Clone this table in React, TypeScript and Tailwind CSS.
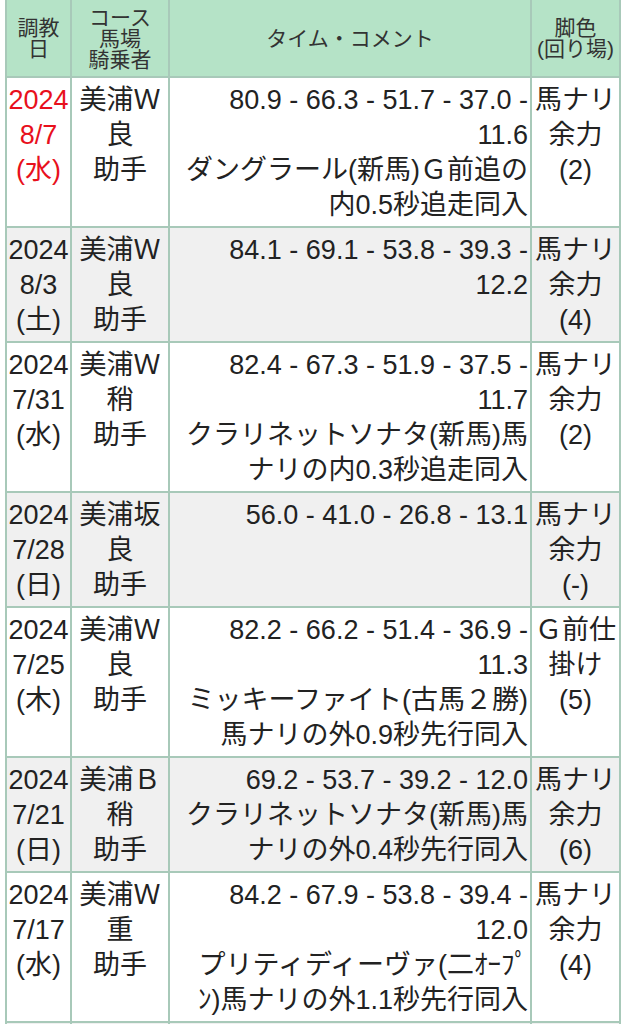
import * as React from "react";

type Row = {
  date: string[];
  course: string[];
  time: string[];
  leg: string[];
  red?: boolean;
};

const rows: Row[] = [
  {
    date: ["2024", "8/7", "(水)"],
    course: ["美浦Ｗ", "良", "助手"],
    time: ["80.9 - 66.3 - 51.7 - 37.0 -", "11.6", "ダングラール(新馬)Ｇ前追の", "内0.5秒追走同入"],
    leg: ["馬ナリ", "余力", "(2)"],
    red: true,
  },
  {
    date: ["2024", "8/3", "(土)"],
    course: ["美浦Ｗ", "良", "助手"],
    time: ["84.1 - 69.1 - 53.8 - 39.3 -", "12.2"],
    leg: ["馬ナリ", "余力", "(4)"],
  },
  {
    date: ["2024", "7/31", "(水)"],
    course: ["美浦Ｗ", "稍", "助手"],
    time: ["82.4 - 67.3 - 51.9 - 37.5 -", "11.7", "クラリネットソナタ(新馬)馬", "ナリの内0.3秒追走同入"],
    leg: ["馬ナリ", "余力", "(2)"],
  },
  {
    date: ["2024", "7/28", "(日)"],
    course: ["美浦坂", "良", "助手"],
    time: ["56.0 - 41.0 - 26.8 - 13.1"],
    leg: ["馬ナリ", "余力", "(-)"],
  },
  {
    date: ["2024", "7/25", "(木)"],
    course: ["美浦Ｗ", "良", "助手"],
    time: ["82.2 - 66.2 - 51.4 - 36.9 -", "11.3", "ミッキーファイト(古馬２勝)", "馬ナリの外0.9秒先行同入"],
    leg: ["Ｇ前仕", "掛け", "(5)"],
  },
  {
    date: ["2024", "7/21", "(日)"],
    course: ["美浦Ｂ", "稍", "助手"],
    time: ["69.2 - 53.7 - 39.2 - 12.0", "クラリネットソナタ(新馬)馬", "ナリの外0.4秒先行同入"],
    leg: ["馬ナリ", "余力", "(6)"],
  },
  {
    date: ["2024", "7/17", "(水)"],
    course: ["美浦Ｗ", "重", "助手"],
    time: ["84.2 - 67.9 - 53.8 - 39.4 -", "12.0", "プリティディーヴァ(二ｵｰﾌﾟ", "ﾝ)馬ナリの外1.1秒先行同入"],
    leg: ["馬ナリ", "余力", "(4)"],
  },
];

function Lines({ lines }: { lines: string[] }) {
  return (
    <>
      {lines.map((l, i) => (
        <div key={i} className="whitespace-nowrap">
          {l}
        </div>
      ))}
    </>
  );
}

export default function App() {
  const head = "bg-[#b5e3c7] text-[#333] text-[21px] leading-[21px] flex flex-col items-center justify-center text-center h-[76px]";
  const cell = "pt-[5px] pb-[3px] text-[27px] leading-[35px]";

  return (
    <div className="min-h-screen bg-white" style={{ fontFamily: "'Liberation Sans', 'Noto Sans CJK JP', sans-serif" }}>
      <div className="ml-[5px] grid w-[616px] grid-cols-[63px_96px_360px_87px] gap-[2px] bg-[#a8c9b9] px-[2px] pb-[2px] text-[#222]">
        <div className={head}>
          <div>調教</div>
          <div>日</div>
        </div>
        <div className={head}>
          <div>コース</div>
          <div>馬場</div>
          <div>騎乗者</div>
        </div>
        <div className={head}>
          <div>タイム・コメント</div>
        </div>
        <div className={head}>
          <div>脚色</div>
          <div>(回り場)</div>
        </div>

        {rows.map((r, i) => {
          const bg = i % 2 === 0 ? "bg-white" : "bg-[#f0f0f0]";
          return (
            <React.Fragment key={i}>
              <div className={`${cell} ${bg} text-center ${r.red ? "text-[#e8101c]" : ""}`}>
                <Lines lines={r.date} />
              </div>
              <div className={`${cell} ${bg} text-center`}>
                <Lines lines={r.course} />
              </div>
              <div className={`${cell} ${bg} pr-[2px] text-right`}>
                <Lines lines={r.time} />
              </div>
              <div className={`${cell} ${bg} text-center`}>
                <Lines lines={r.leg} />
              </div>
            </React.Fragment>
          );
        })}

        {/* next row, only its top edge is in view */}
        <div className="h-[40px] bg-[#f0f0f0]" />
        <div className="h-[40px] bg-[#f0f0f0]" />
        <div className="h-[40px] bg-[#f0f0f0]" />
        <div className="h-[40px] bg-[#f0f0f0]" />
      </div>
    </div>
  );
}
